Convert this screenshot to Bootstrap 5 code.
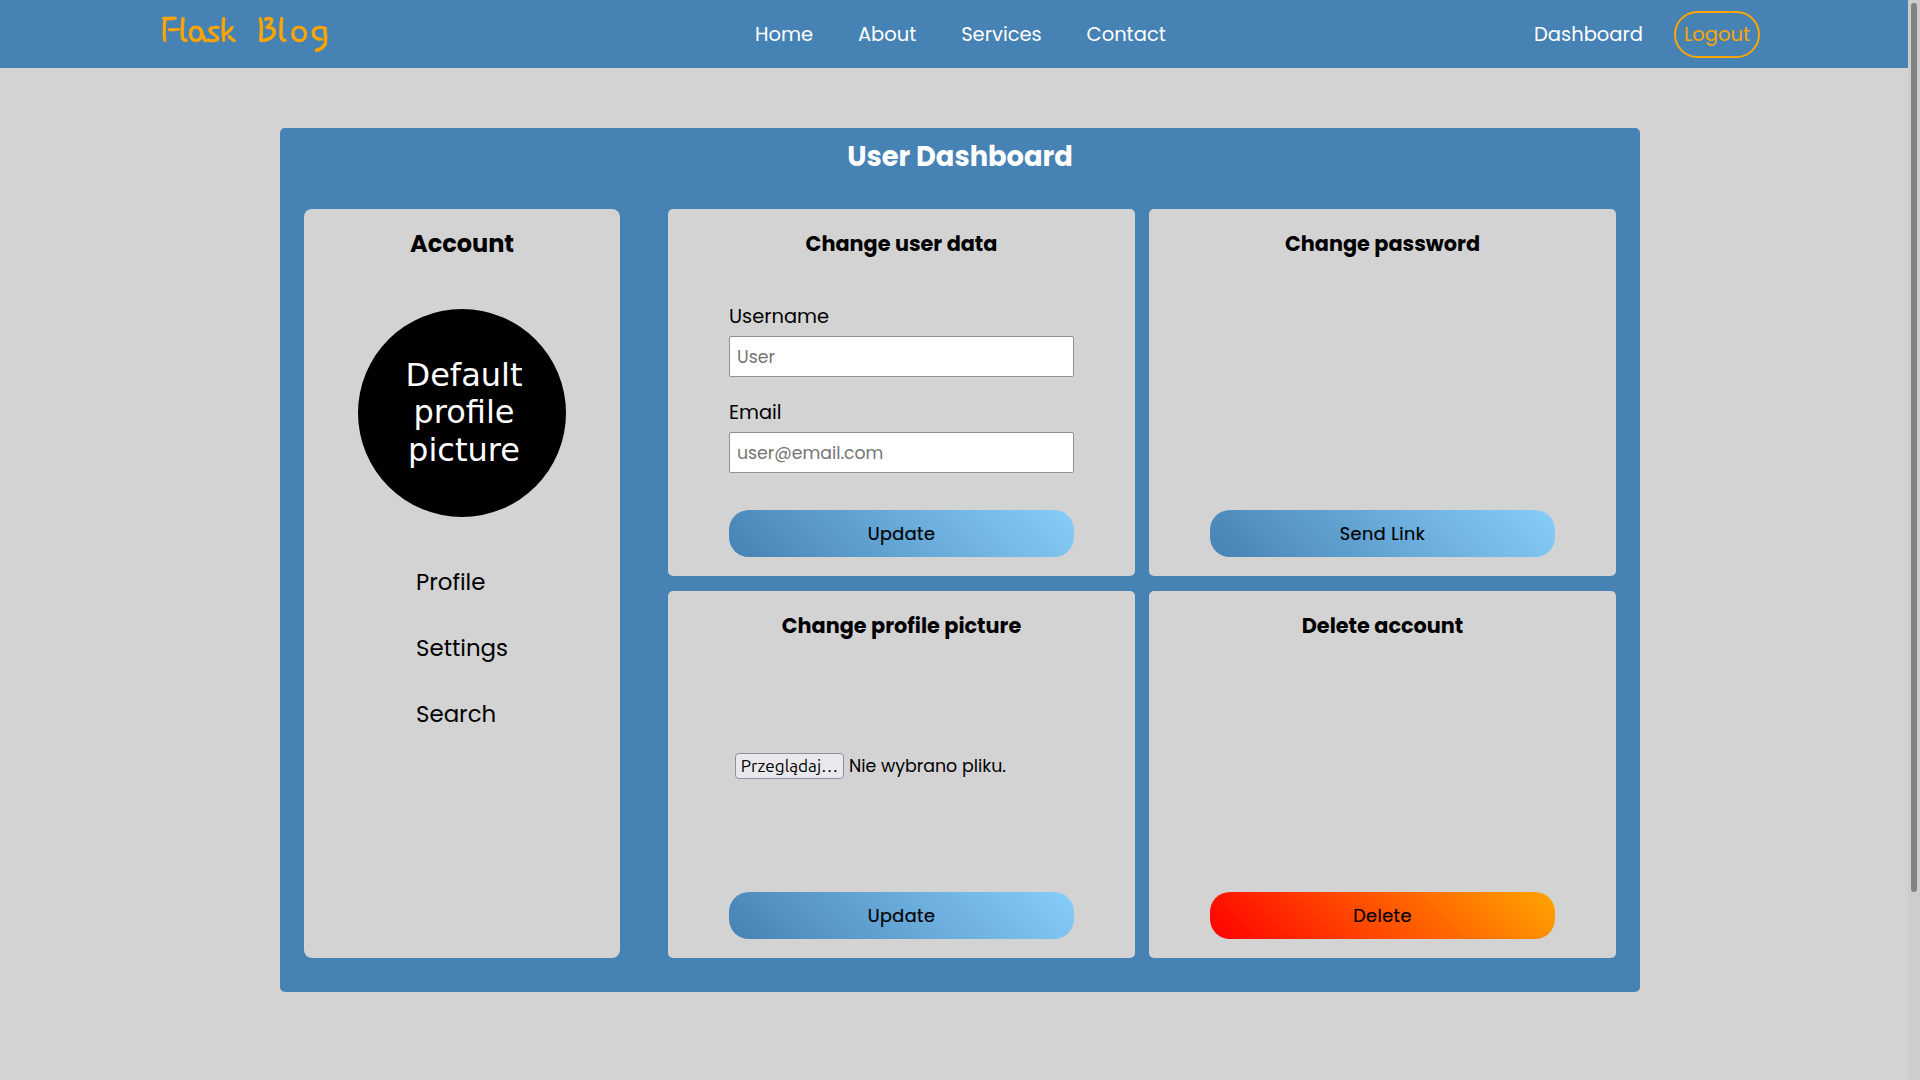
<!DOCTYPE html>
<html lang="en">
<head>
<meta charset="utf-8">
<meta name="viewport" content="width=device-width, initial-scale=1">
<title>Flask Blog</title>
<link href="https://cdn.jsdelivr.net/npm/bootstrap@5.3.0/dist/css/bootstrap.min.css" rel="stylesheet">
<style>
:root{--steel:#4682b4;--gray:#d3d3d3}
body{background:var(--gray);color:#000;font-family:Poppins,Inter,sans-serif;height:1080px;overflow:hidden}
a{color:inherit;text-decoration:none}
.topbar{background:var(--steel);height:68px;width:1908px;color:#fff;font-size:19.5px;padding:0 148px 0 160px}
.brand{width:595px;color:orange;font:400 50px/60px "Hi Melody",Lato,sans-serif;letter-spacing:-1.8px;word-spacing:10px;-webkit-text-stroke:.4px orange;white-space:nowrap}
.brand span{letter-spacing:1.6px}
.site-links{gap:44.8px;padding-top:2px}
.user-links{gap:31px}
.user-links>a:first-child{padding-top:2px}
.logout{width:86px;height:47px;border:2px solid orange;border-radius:24px;color:orange;padding-top:2px}
.panel{width:1360px;height:864px;margin:60px auto 0;background:var(--steel);border-radius:5px;padding:1px 24px 34px}
.panel-title{font-size:27.3px;line-height:56px;font-weight:700;color:#fff;margin-bottom:24px}
.account{width:316px;background:var(--gray);border-radius:8px;padding-top:19px}
.account h2{font-size:24px;line-height:32px;font-weight:700;margin-bottom:49px}
.avatar{width:208px;height:208px;background:#000;color:#fff;font:32px/37.5px "DejaVu Sans",sans-serif;padding-left:4px}
.side-menu{margin:32px 0 0 112px;font-size:22.9px;line-height:66px}
.tiles{width:948px;display:grid;grid-template-columns:467px 467px;grid-template-rows:367px 367px;gap:15px 14px}
.tile{background:var(--gray);border-radius:5px;padding:19px 61px}
.tile h3{font-size:20.8px;line-height:32px;font-weight:700;margin:0 -20px}
.fields{margin-top:43px}
.fields label{display:block;font-size:19.4px;line-height:28px;margin-bottom:5px}
.fields input{height:41px;padding:0 7px;font-size:17.3px;border:1px solid #8f8f9d;border-radius:2px;background:#fff;margin-bottom:22px}
.fields input::placeholder{color:#757575;opacity:1}
.action{height:47px;border:0;border-radius:20px;padding:2px 0 0;font-size:17.6px;-webkit-text-stroke:.2px #000;letter-spacing:.45px;background:linear-gradient(45deg,var(--steel),lightskyblue);color:#000}
.action.danger{background:linear-gradient(45deg,red,orange)}
.picker{gap:5px;font-size:17.4px;padding:0 0 2px 6px}
.browse{width:109px;height:26px;border:1px solid #8f8f9d;border-radius:4px;background:#e9e9ed;font:17.2px/22px Ubuntu,"Noto Sans",sans-serif;padding:0 0 1px;color:#000}
.scroll-track{position:fixed;top:0;right:0;width:12px;height:100%;background:#cdcdcd;padding:3px}
.scroll-thumb{height:889px;width:6px;border-radius:3px;background:#7f8383}
</style>
<script src="https://cdn.jsdelivr.net/npm/bootstrap@5.3.0/dist/js/bootstrap.bundle.min.js"></script>
</head>
<body>
<nav class="topbar d-flex align-items-center">
  <a class="brand" href="#">Flask <span>Blog</span></a>
  <div class="site-links d-flex">
    <a href="#">Home</a>
    <a href="#">About</a>
    <a href="#">Services</a>
    <a href="#">Contact</a>
  </div>
  <div class="user-links d-flex align-items-center ms-auto">
    <a href="#">Dashboard</a>
    <a href="#" class="logout d-flex align-items-center justify-content-center">Logout</a>
  </div>
</nav>

<main class="panel">
  <h1 class="panel-title text-center">User Dashboard</h1>
  <div class="d-flex justify-content-between">
    <aside class="account">
      <h2 class="text-center">Account</h2>
      <div class="avatar rounded-circle mx-auto d-flex align-items-center justify-content-center text-center">Default<br>profile<br>picture</div>
      <ul class="side-menu list-unstyled">
        <li><a href="#">Profile</a></li>
        <li><a href="#">Settings</a></li>
        <li><a href="#">Search</a></li>
      </ul>
    </aside>
    <div class="tiles">
      <section class="tile d-flex flex-column">
        <h3 class="text-center">Change user data</h3>
        <div class="fields">
          <label for="username">Username</label>
          <input id="username" class="d-block w-100" type="text" placeholder="User">
          <label for="email">Email</label>
          <input id="email" class="d-block w-100" type="email" placeholder="user@email.com">
        </div>
        <button class="action w-100 mt-auto">Update</button>
      </section>
      <section class="tile d-flex flex-column">
        <h3 class="text-center">Change password</h3>
        <button class="action w-100 mt-auto">Send Link</button>
      </section>
      <section class="tile d-flex flex-column">
        <h3 class="text-center">Change profile picture</h3>
        <div class="picker d-flex align-items-center flex-grow-1">
          <button class="browse">Przeglądaj…</button>
          <span>Nie wybrano pliku.</span>
        </div>
        <button class="action w-100">Update</button>
      </section>
      <section class="tile d-flex flex-column">
        <h3 class="text-center">Delete account</h3>
        <button class="action danger w-100 mt-auto">Delete</button>
      </section>
    </div>
  </div>
</main>

<div class="scroll-track"><div class="scroll-thumb"></div></div>
</body>
</html>
